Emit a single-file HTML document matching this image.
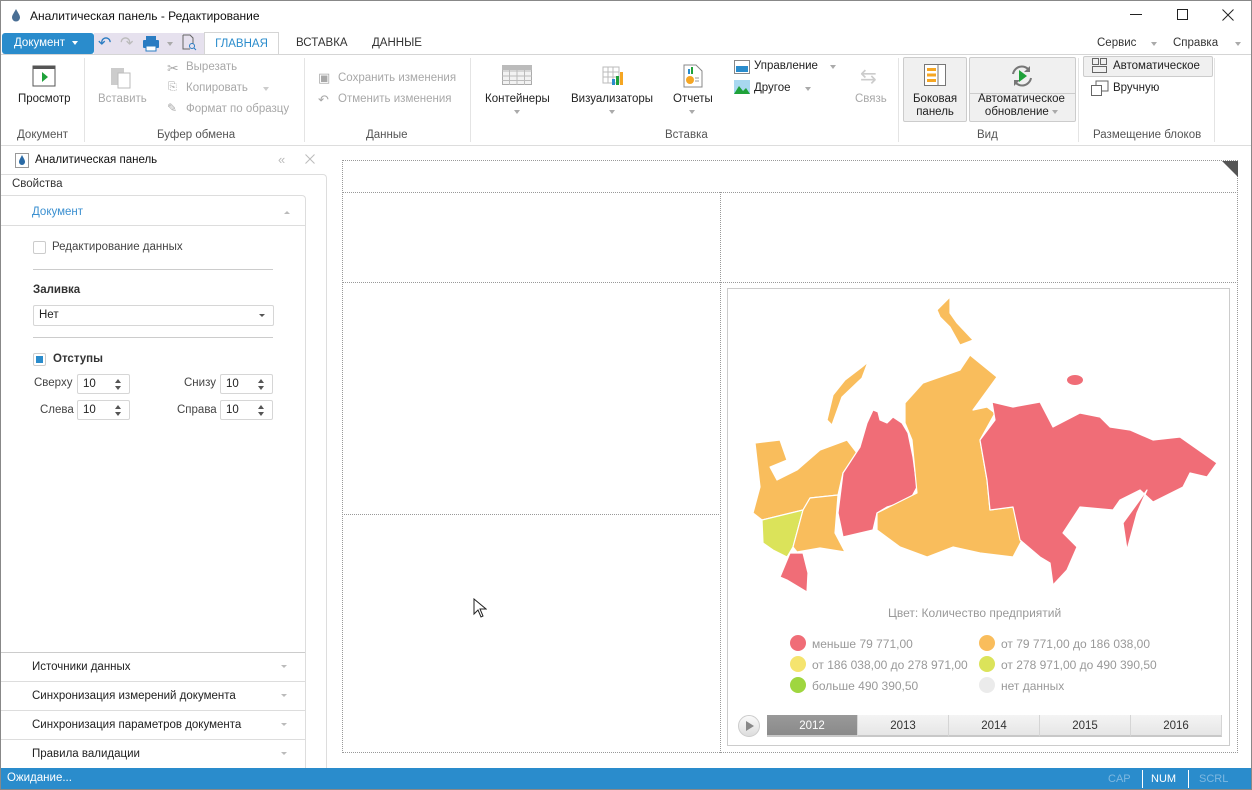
<!DOCTYPE html>
<html><head><meta charset="utf-8"><style>
*{box-sizing:border-box;margin:0;padding:0}
body{width:1252px;height:790px;position:relative;overflow:hidden;background:#fff;font-family:"Liberation Sans","DejaVu Sans",sans-serif;font-size:11.5px;color:#333}
.a{position:absolute;white-space:nowrap}
.g{color:#a8a8a8}
.lbl{color:#555;font-size:11.5px}
.sep{position:absolute;top:58px;width:1px;height:84px;background:#e4e4e4}
.dd{display:inline-block;width:0;height:0;border-left:3.5px solid transparent;border-right:3.5px solid transparent;border-top:4px solid #aaa;vertical-align:middle}
.sec{position:absolute;left:0;width:305px;height:29px;border-top:1px solid #ddd;font-size:11.5px;color:#222}
.sec span{position:absolute;left:32px;top:8px}
.sec i{position:absolute;right:18px;top:12px;border-left:3px solid transparent;border-right:3px solid transparent;border-top:3px solid #bbb}
.spin{position:absolute;width:53px;height:20px;border:1px solid #d6d6d6;border-radius:2px;background:#fff;font-size:11.5px;padding:3px 0 0 5px;color:#222}
.spin:after{content:"";position:absolute;right:8px;top:4px;border-left:3px solid transparent;border-right:3px solid transparent;border-bottom:4px solid #555}
.spin:before{content:"";position:absolute;right:8px;top:11px;border-left:3px solid transparent;border-right:3px solid transparent;border-top:4px solid #555}
.dot{position:absolute;border:0 dotted #999}
.lg{position:absolute;font-size:12px;color:#999}
.lg b{position:absolute;left:-22px;top:-2px;width:16px;height:16px;border-radius:50%}
.yr{position:absolute;top:715px;height:22px;width:91px;background:linear-gradient(#f4f4f4,#e6e6e6);border-right:1px solid #d5d5d5;font-size:11.5px;color:#333;text-align:center;padding-top:5px;border-bottom:2px solid #c8c8c8}
</style></head><body>
<div class="a" style="left:0;top:0;width:1252px;height:790px;border:1px solid #888;pointer-events:none;z-index:9"></div>
<!-- title -->
<svg class="a" style="left:11px;top:9px" width="10" height="13" viewBox="0 0 10 13"><path d="M5 0C3 4 1 6 1 8.5a4 4 0 0 0 8 0C9 6 7 4 5 0z" fill="#4a6f95"/></svg>
<div class="a" style="left:30px;top:9px;font-size:12px;color:#111">Аналитическая панель - Редактирование</div>
<div class="a" style="left:1130px;top:14px;width:12px;height:1px;background:#222"></div>
<div class="a" style="left:1177px;top:9px;width:11px;height:11px;border:1px solid #222"></div>
<svg class="a" style="left:1222px;top:9px" width="12" height="12"><path d="M0.5 0.5l11 11M11.5 0.5l-11 11" stroke="#222"/></svg>
<!-- quick access / tabs -->
<div class="a" style="left:2px;top:33px;width:92px;height:21px;background:#2a8ccc;border-radius:3px;color:#fff;padding:4px 0 0 12px">Документ <span class="dd" style="border-top-color:#fff;margin-left:4px"></span></div>
<div class="a" style="left:94px;top:33px;width:110px;height:21px;background:#e6e1ee"></div>
<div class="a" style="left:98px;top:33px;font-size:16px;color:#2a7cc2">↶</div>
<div class="a" style="left:120px;top:33px;font-size:16px;color:#bbb">↷</div>
<svg class="a" style="left:142px;top:36px" width="18" height="16"><rect x="4" y="0" width="10" height="4" fill="#2a7cc2"/><rect x="1" y="4" width="16" height="8" rx="1" fill="#2a7cc2"/><rect x="4" y="10" width="10" height="5" fill="#fff" stroke="#2a7cc2"/></svg>
<span class="a dd" style="left:167px;top:42px"></span>
<svg class="a" style="left:181px;top:34px" width="16" height="17"><path d="M2 1h7l3 3v6M2 1v14h7" fill="none" stroke="#666"/><circle cx="11" cy="12" r="2.5" fill="none" stroke="#2a7cc2"/><path d="M13 14l2 2" stroke="#2a7cc2"/></svg>
<div class="a" style="left:204px;top:32px;width:75px;height:23px;border:1px solid #d5d5d5;border-bottom:none;background:#fff;color:#2a8ccc;text-align:center;padding-top:5px">ГЛАВНАЯ</div>
<div class="a" style="left:296px;top:37px;color:#333">ВСТАВКА</div>
<div class="a" style="left:372px;top:37px;color:#333">ДАННЫЕ</div>
<div class="a" style="left:1097px;top:37px;color:#333">Сервис</div><span class="a dd" style="left:1151px;top:42px"></span>
<div class="a" style="left:1173px;top:37px;color:#333">Справка</div><span class="a dd" style="left:1235px;top:42px"></span>
<div class="a" style="left:1px;top:54px;width:1250px;height:1px;background:#d5d5d5"></div>
<!-- ribbon -->
<div class="a" style="left:1px;top:145px;width:1250px;height:1px;background:#ddd"></div>
<div class="sep" style="left:84px"></div><div class="sep" style="left:304px"></div><div class="sep" style="left:470px"></div><div class="sep" style="left:898px"></div><div class="sep" style="left:1078px"></div><div class="sep" style="left:1214px"></div>
<svg class="a" style="left:32px;top:65px" width="24" height="22"><rect x="1" y="1" width="22" height="20" fill="#fff" stroke="#555"/><rect x="1" y="1" width="22" height="3" fill="#555"/><path d="M10 7l6 5-6 5z" fill="#1fa23a"/></svg>
<div class="a" style="left:18px;top:93px;color:#222">Просмотр</div>
<div class="a lbl" style="left:17px;top:129px">Документ</div>
<svg class="a" style="left:110px;top:65px" width="22" height="24"><rect x="1" y="3" width="13" height="17" fill="#ccc"/><rect x="8" y="8" width="12" height="15" fill="#fff" stroke="#bbb"/></svg>
<div class="a g" style="left:98px;top:93px">Вставить</div>
<div class="a g" style="left:167px;top:60px;font-size:14px">✂</div><div class="a g" style="left:186px;top:61px">Вырезать</div>
<div class="a g" style="left:168px;top:81px;font-size:11px">⎘</div><div class="a g" style="left:186px;top:82px">Копировать</div><span class="a dd" style="left:263px;top:87px;border-top-color:#ccc"></span>
<div class="a g" style="left:167px;top:101px;font-size:12px">✎</div><div class="a g" style="left:186px;top:103px">Формат по образцу</div>
<div class="a lbl" style="left:157px;top:129px">Буфер обмена</div>
<div class="a g" style="left:318px;top:70px;font-size:13px">▣</div><div class="a g" style="left:338px;top:72px">Сохранить изменения</div>
<div class="a g" style="left:318px;top:92px;font-size:13px">↶</div><div class="a g" style="left:338px;top:93px">Отменить изменения</div>
<div class="a lbl" style="left:366px;top:129px">Данные</div>
<svg class="a" style="left:502px;top:65px" width="30" height="20"><rect x="0.5" y="0.5" width="29" height="19" fill="#f2f2f2" stroke="#aaa"/><path d="M0 6h30M0 11h30M0 15.5h30M7.5 0v20M15 0v20M22.5 0v20" stroke="#bbb"/><rect x="0" y="0" width="30" height="5" fill="#bbb"/></svg>
<div class="a" style="left:485px;top:93px;color:#222">Контейнеры</div><span class="a dd" style="left:514px;top:110px"></span>
<svg class="a" style="left:602px;top:66px" width="22" height="20"><path d="M1 1h16v16H1zM1 6h16M1 11h16M6 1v16M11 1v16" stroke="#bbb" fill="none"/><rect x="10" y="13" width="3" height="6" fill="#2a8ccc"/><rect x="14" y="10" width="3" height="9" fill="#1fa23a"/><rect x="18" y="6" width="3" height="13" fill="#f5a623"/></svg>
<div class="a" style="left:571px;top:93px;color:#222">Визуализаторы</div><span class="a dd" style="left:609px;top:110px"></span>
<svg class="a" style="left:683px;top:64px" width="20" height="24"><path d="M1 1h12l6 6v16H1z" fill="#fff" stroke="#888"/><rect x="5" y="5" width="2" height="5" fill="#2a8ccc"/><rect x="8" y="3" width="2" height="7" fill="#1fa23a"/><circle cx="7" cy="16" r="4" fill="#f5a623"/><path d="M12 14h4M12 17h4" stroke="#999"/></svg>
<div class="a" style="left:673px;top:93px;color:#222">Отчеты</div><span class="a dd" style="left:689px;top:110px"></span>
<svg class="a" style="left:734px;top:60px" width="16" height="14"><rect x="0.5" y="0.5" width="15" height="13" fill="#fff" stroke="#888"/><rect x="2" y="6" width="12" height="6" fill="#2a8ccc"/></svg>
<div class="a" style="left:754px;top:60px;color:#222">Управление</div><span class="a dd" style="left:830px;top:65px"></span>
<svg class="a" style="left:734px;top:80px" width="16" height="14"><rect width="16" height="14" fill="#a8d8f0"/><path d="M0 14L5 6l4 5 3-3 4 6z" fill="#1fa23a"/></svg>
<div class="a" style="left:754px;top:82px;color:#222">Другое</div><span class="a dd" style="left:805px;top:87px"></span>
<div class="a g" style="left:860px;top:64px;font-size:20px;color:#ccc">⇆</div>
<div class="a g" style="left:855px;top:93px">Связь</div>
<div class="a lbl" style="left:665px;top:129px">Вставка</div>
<div class="a" style="left:903px;top:57px;width:64px;height:65px;background:#f0f0f0;border:1px solid #ccc;border-radius:2px"></div>
<svg class="a" style="left:924px;top:64px" width="22" height="22"><rect x="0.5" y="0.5" width="21" height="21" fill="#fff" stroke="#777"/><path d="M14 0v22" stroke="#777"/><rect x="3" y="4" width="9" height="3" fill="#f5a623"/><rect x="3" y="9.5" width="9" height="3" fill="#f5a623"/><rect x="3" y="15" width="9" height="3" fill="#f5a623"/></svg>
<div class="a" style="left:913px;top:93px;color:#222;text-align:center;line-height:13px">Боковая<br>панель</div>
<div class="a" style="left:969px;top:57px;width:107px;height:65px;background:#f0f0f0;border:1px solid #ccc;border-radius:2px"></div>
<div class="a" style="left:970px;top:93px;width:105px;height:1px;background:#ccc"></div>
<svg class="a" style="left:1009px;top:63px" width="26" height="26"><path d="M4 11a9 9 0 0 1 16-4M22 15a9 9 0 0 1-16 4" fill="none" stroke="#777" stroke-width="2"/><path d="M21 3v6h-6z" fill="#777"/><path d="M5 23v-6h6z" fill="#777"/><path d="M10 7l8 6-8 6z" fill="#1fa23a"/></svg>
<div class="a" style="left:978px;top:93px;color:#222;line-height:13px;text-align:center">Автоматическое<br>обновление <span class="dd"></span></div>
<div class="a lbl" style="left:977px;top:129px">Вид</div>
<div class="a" style="left:1083px;top:56px;width:130px;height:21px;background:#f0f0f0;border:1px solid #ccc;border-radius:2px"></div>
<svg class="a" style="left:1092px;top:58px" width="16" height="16"><rect x="0.5" y="0.5" width="6" height="6" fill="none" stroke="#666"/><rect x="8.5" y="0.5" width="6" height="6" fill="none" stroke="#666"/><rect x="0.5" y="8.5" width="14" height="6" fill="none" stroke="#666"/></svg>
<div class="a" style="left:1113px;top:60px;color:#222">Автоматическое</div>
<svg class="a" style="left:1091px;top:80px" width="18" height="16"><rect x="0.5" y="5.5" width="10" height="10" fill="none" stroke="#666"/><path d="M5 5V1h12v10h-6" fill="none" stroke="#666"/></svg>
<div class="a" style="left:1113px;top:82px;color:#222">Вручную</div>
<div class="a lbl" style="left:1093px;top:129px">Размещение блоков</div>
<!-- left panel -->
<svg class="a" style="left:15px;top:153px" width="14" height="15"><rect x="0.5" y="0.5" width="13" height="14" fill="#fff" stroke="#999"/><path d="M7 2C5 6 4 7 4 9a3 3 0 0 0 6 0c0-2-1-3-3-7z" fill="#2a6aa5"/></svg>
<div class="a" style="left:35px;top:154px;color:#111">Аналитическая панель</div>
<div class="a" style="left:278px;top:152px;color:#bbb;font-size:13px">«</div>
<svg class="a" style="left:305px;top:154px" width="10" height="10"><path d="M0.5 0.5l9 9M9.5 0.5l-9 9" stroke="#bbb"/></svg>
<div class="a" style="left:1px;top:174px;width:326px;height:594px;border-top:1px solid #ddd;border-right:1px solid #ddd;border-radius:0 4px 0 0"></div>
<div class="a" style="left:12px;top:178px;color:#333">Свойства</div>
<div class="a" style="left:1px;top:195px;width:305px;height:573px;border-top:1px solid #ddd;border-right:1px solid #ddd;border-radius:0 4px 0 0"></div>
<div class="a" style="left:32px;top:206px;color:#3a8fd0">Документ</div>
<div class="a" style="left:284px;top:211px;border-left:3px solid transparent;border-right:3px solid transparent;border-bottom:3px solid #bbb"></div>
<div class="a" style="left:1px;top:225px;width:304px;height:1px;background:#ddd"></div>
<div class="a" style="left:33px;top:241px;width:13px;height:13px;border:1px solid #ccc;border-radius:2px"></div>
<div class="a" style="left:52px;top:241px;color:#444">Редактирование данных</div>
<div class="a" style="left:33px;top:269px;width:240px;height:1px;background:#ccc"></div>
<div class="a" style="left:33px;top:284px;font-weight:bold;color:#333">Заливка</div>
<div class="a" style="left:33px;top:305px;width:241px;height:21px;border:1px solid #d6d6d6;border-radius:2px;padding:3px 0 0 5px;color:#222">Нет</div>
<div class="a" style="left:259px;top:314px;border-left:3px solid transparent;border-right:3px solid transparent;border-top:3px solid #555"></div>
<div class="a" style="left:33px;top:337px;width:240px;height:1px;background:#ccc"></div>
<div class="a" style="left:33px;top:353px;width:13px;height:13px;border:1px solid #ccc;border-radius:2px"></div>
<div class="a" style="left:36px;top:356px;width:7px;height:7px;background:#2a8ccc"></div>
<div class="a" style="left:53px;top:353px;font-weight:bold;color:#333">Отступы</div>
<div class="a" style="left:34px;top:377px;color:#444">Сверху</div><div class="spin" style="left:77px;top:374px">10</div>
<div class="a" style="left:184px;top:377px;color:#444">Снизу</div><div class="spin" style="left:220px;top:374px">10</div>
<div class="a" style="left:40px;top:404px;color:#444">Слева</div><div class="spin" style="left:77px;top:400px">10</div>
<div class="a" style="left:177px;top:404px;color:#444">Справа</div><div class="spin" style="left:220px;top:400px">10</div>
<div class="sec" style="top:652px;border-top-color:#ccc"><span>Источники данных</span><i></i></div>
<div class="sec" style="top:681px"><span>Синхронизация измерений документа</span><i></i></div>
<div class="sec" style="top:710px"><span>Синхронизация параметров документа</span><i></i></div>
<div class="sec" style="top:739px"><span>Правила валидации</span><i></i></div>
<!-- canvas -->
<div class="dot" style="left:342px;top:160px;width:896px;height:593px;border-width:1px"></div>
<div class="dot" style="left:342px;top:192px;width:896px;border-top-width:1px"></div>
<div class="dot" style="left:342px;top:282px;width:896px;border-top-width:1px"></div>
<div class="dot" style="left:342px;top:514px;width:379px;border-top-width:1px"></div>
<div class="dot" style="left:720px;top:192px;height:561px;border-left-width:1px"></div>
<div class="a" style="left:1222px;top:161px;width:0;height:0;border-left:16px solid transparent;border-top:16px solid #555"></div>
<div class="a" style="left:727px;top:288px;width:503px;height:458px;border:1px solid #ccc"></div>
<svg class="a" style="left:0;top:0" width="1252" height="790">
<g stroke="#fff" stroke-width="1.2" stroke-linejoin="round">
<path fill="#f9bd5c" d="M755,443 780,440 787,460 770,467 777,480 797,470 820,450 847,440 857,453 843,473 838,495 810,498 803,510 762,520 753,513 760,487z"/>
<path fill="#f9bd5c" d="M827,420 833,395 845,380 862,367 868,362 862,378 842,397 832,425z"/>
<path fill="#dbe35a" d="M762,520 803,510 793,547 787,557 773,550 763,543z"/>
<path fill="#f9bd5c" d="M803,510 810,498 838,495 835,533 845,552 820,548 797,552 793,547z"/>
<path fill="#f06d77" d="M790,553 803,553 808,573 807,592 787,580 780,577z"/>
<path fill="#f06d77" d="M843,473 860,447 867,423 873,410 878,412 880,420 887,423 893,417 902,423 908,433 913,457 917,487 910,500 887,507 877,513 873,530 843,537 838,513z"/>
<path fill="#f9bd5c" d="M905,403 923,383 960,370 970,355 997,377 973,410 987,407 995,413 980,440 987,480 990,510 1013,507 1022,540 1013,557 980,553 953,547 927,557 900,547 877,530 877,513 917,493 912,440 905,423z"/>
<path fill="#f9bd5c" d="M937,310 950,297 950,313 957,323 973,340 960,345 950,327 940,317z"/>
<path fill="#f06d77" d="M992,402 1013,407 1040,402 1053,427 1080,413 1100,417 1110,427 1130,430 1153,440 1180,437 1217,463 1207,477 1190,473 1183,487 1153,502 1140,490 1120,500 1113,510 1080,507 1063,533 1077,547 1067,570 1053,585 1050,563 1040,557 1020,540 1013,507 990,510 987,480 980,440 995,420z"/>
<path fill="#f06d77" d="M1123,523 1147,490 1137,513 1127,550z"/>
</g>
<ellipse cx="1075" cy="380" rx="8" ry="5" fill="#f06d77"/>
</svg>
<div class="a" style="left:888px;top:606px;font-size:12px;color:#999">Цвет: Количество предприятий</div>
<div class="lg" style="left:812px;top:637px"><b style="background:#f06d77"></b>меньше 79 771,00</div>
<div class="lg" style="left:1001px;top:637px"><b style="background:#f9bd5c"></b>от 79 771,00 до 186 038,00</div>
<div class="lg" style="left:812px;top:658px"><b style="background:#f5e46e"></b>от 186 038,00 до 278 971,00</div>
<div class="lg" style="left:1001px;top:658px"><b style="background:#dbe35a"></b>от 278 971,00 до 490 390,50</div>
<div class="lg" style="left:812px;top:679px"><b style="background:#9fd63f"></b>больше 490 390,50</div>
<div class="lg" style="left:1001px;top:679px"><b style="background:#ebebeb"></b>нет данных</div>
<div class="a" style="left:738px;top:715px;width:22px;height:22px;border-radius:50%;background:linear-gradient(#fafafa,#ddd);border:1px solid #ccc"></div>
<div class="a" style="left:746px;top:721px;border-top:5px solid transparent;border-bottom:5px solid transparent;border-left:8px solid #888"></div>
<div class="yr" style="left:767px;background:linear-gradient(#999,#8a8a8a);color:#fff">2012</div>
<div class="yr" style="left:858px">2013</div>
<div class="yr" style="left:949px">2014</div>
<div class="yr" style="left:1040px">2015</div>
<div class="yr" style="left:1131px">2016</div>
<svg class="a" style="left:473px;top:598px" width="14" height="22"><path d="M1 1v15l4-4 3 7 2-1-3-7h6z" fill="#fff" stroke="#222"/></svg>
<!-- status -->
<div class="a" style="left:0;top:768px;width:1252px;height:22px;background:#2a8ccc"></div>
<div class="a" style="left:7px;top:772px;color:#fff">Ожидание...</div>
<div class="a" style="left:1108px;top:773px;color:#7fb8e0;font-size:11px">CAP</div>
<div class="a" style="left:1142px;top:770px;width:1px;height:18px;background:#fff"></div>
<div class="a" style="left:1151px;top:773px;color:#fff;font-size:11px">NUM</div>
<div class="a" style="left:1188px;top:770px;width:1px;height:18px;background:#fff"></div>
<div class="a" style="left:1199px;top:773px;color:#7fb8e0;font-size:11px">SCRL</div>
</body></html>
